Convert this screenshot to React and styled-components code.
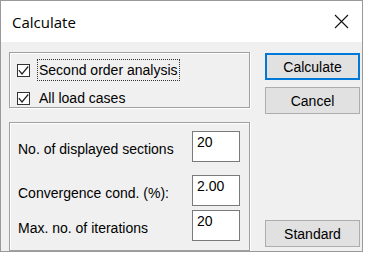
import React from 'react'
import styled, { createGlobalStyle } from 'styled-components'

const GlobalStyle = createGlobalStyle`
    html, body {
        margin: 0;
        padding: 0;
        background: #fff;
    }
    * {
        box-sizing: border-box;
    }
`

const Window = styled.div`
    width: 363px;
    height: 252px;
    border: 1px solid #999;
    background: #f0f0f0;
    display: flex;
    flex-direction: column;
    overflow: hidden;
    font-family: "Liberation Sans", Arial, sans-serif;
    font-size: 14px;
    color: #000;
`

const TitleBar = styled.div`
    height: 41px;
    flex: none;
    background: #fff;
    display: flex;
    align-items: center;
    justify-content: space-between;
    padding: 0 13px 0 11px;
`

const Title = styled.span`
    font-family: "Open Sans", "Noto Sans", sans-serif;
    font-size: 15px;
    margin-top: 1px;
`

const Body = styled.div`
    flex: 1;
    display: flex;
    gap: 15px;
    padding: 10px 0 0 8px;
`

const LeftColumn = styled.div`
    width: 241px;
    display: flex;
    flex-direction: column;
    gap: 14px;
`

const GroupBox = styled.div`
    border: 1px solid #a0a0a0;
    box-shadow: inset 1px 1px 0 #fff, 1px 1px 0 #fff;
    height: ${p => p.height ? `${p.height}px` : 'auto'};
    flex: ${p => p.grow ? 1 : 'none'};
    display: flex;
    flex-direction: column;
    padding: ${p => p.pad};
    gap: ${p => p.gap || 0}px;
`

const CheckRow = styled.label`
    height: 22px;
    display: flex;
    align-items: center;
`

const CheckBox = styled.span`
    width: 13px;
    height: 13px;
    border: 1px solid #333;
    background: #fff;
    display: flex;
    align-items: center;
    justify-content: center;
    flex: none;
`

const CheckLabel = styled.span`
    margin-left: 7px;
    padding: 0 1px;
    height: 22px;
    display: flex;
    align-items: center;
    border: 1px dotted ${p => p.focused ? '#333' : 'transparent'};
`

const FieldRow = styled.div`
    display: flex;
    align-items: center;
    justify-content: space-between;
    margin-top: ${p => p.offset || 0}px;
`

const FieldLabel = styled.span`
    padding-top: 5px;
`

const Input = styled.div`
    width: 48px;
    height: 31px;
    border: 1px solid #7a7a7a;
    background: #fff;
    padding: 2px 0 0 4px;
    line-height: 16px;
`

const RightColumn = styled.div`
    width: 95px;
    display: flex;
    flex-direction: column;
    padding-top: 1px;
`

const Button = styled.button`
    width: 95px;
    height: 27px;
    margin-top: ${p => p.offset || 0}px;
    background: #e1e1e1;
    border: 1px solid ${p => p.primary ? '#0078d7' : '#adadad'};
    box-shadow: ${p => p.primary ? 'inset 0 0 0 1px #0078d7' : 'none'};
    font-family: "Liberation Sans", Arial, sans-serif;
    font-size: 14px;
    color: #000;
    padding: 0;
    display: flex;
    align-items: center;
    justify-content: center;
`

const Check = () => (
    <svg width="11" height="11" viewBox="0 0 11 11">
        <polyline points="0.8,5.2 4,9 10.2,1.5" fill="none" stroke="#222" strokeWidth="1.2" />
    </svg>
)

const CloseIcon = () => (
    <svg width="15" height="15" viewBox="0 0 15 15">
        <path d="M1 1 L14 14 M14 1 L1 14" stroke="#111" strokeWidth="1.1" />
    </svg>
)

const App = () => {
    return (
        <>
            <GlobalStyle />
            <Window>
                <TitleBar>
                    <Title>Calculate</Title>
                    <CloseIcon />
                </TitleBar>
                <Body>
                    <LeftColumn>
                        <GroupBox height={56} pad="6px 0 0 7px" gap={6}>
                            <CheckRow>
                                <CheckBox><Check /></CheckBox>
                                <CheckLabel focused>Second order analysis</CheckLabel>
                            </CheckRow>
                            <CheckRow>
                                <CheckBox><Check /></CheckBox>
                                <CheckLabel>All load cases</CheckLabel>
                            </CheckRow>
                        </GroupBox>
                        <GroupBox grow pad="8px 9px 0 8px">
                            <FieldRow>
                                <FieldLabel>No. of displayed sections</FieldLabel>
                                <Input>20</Input>
                            </FieldRow>
                            <FieldRow offset={13}>
                                <FieldLabel>Convergence cond. (%):</FieldLabel>
                                <Input>2.00</Input>
                            </FieldRow>
                            <FieldRow offset={4}>
                                <FieldLabel>Max. no. of iterations</FieldLabel>
                                <Input>20</Input>
                            </FieldRow>
                        </GroupBox>
                    </LeftColumn>
                    <RightColumn>
                        <Button primary>Calculate</Button>
                        <Button offset={7}>Cancel</Button>
                        <Button offset={106}>Standard</Button>
                    </RightColumn>
                </Body>
            </Window>
        </>
    )
}

export default App
